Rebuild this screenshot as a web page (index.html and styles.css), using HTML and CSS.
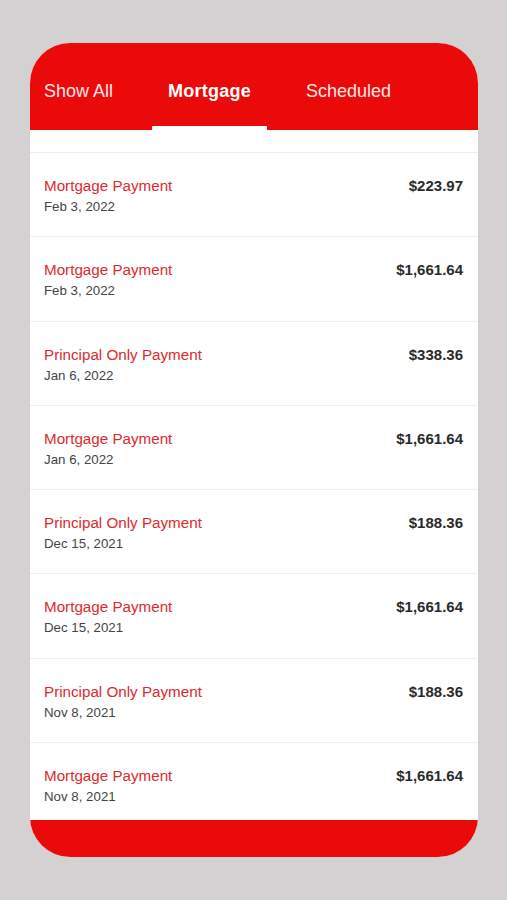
FILE: index.html
```html
<!DOCTYPE html>
<html>
<head>
<meta charset="utf-8">
<link rel="stylesheet" href="styles.css">
</head>
<body>
<div class="phone">
  <div class="tabs">
    <div class="tab">Show All</div>
    <div class="tab active">Mortgage</div>
    <div class="tab">Scheduled</div>
  </div>
  <div class="list">
    <div class="spacer"></div>
    <div class="row"><div class="info"><div class="title">Mortgage Payment</div><div class="date">Feb 3, 2022</div></div><div class="amount">$223.97</div></div>
    <div class="row"><div class="info"><div class="title">Mortgage Payment</div><div class="date">Feb 3, 2022</div></div><div class="amount">$1,661.64</div></div>
    <div class="row"><div class="info"><div class="title">Principal Only Payment</div><div class="date">Jan 6, 2022</div></div><div class="amount">$338.36</div></div>
    <div class="row"><div class="info"><div class="title">Mortgage Payment</div><div class="date">Jan 6, 2022</div></div><div class="amount">$1,661.64</div></div>
    <div class="row"><div class="info"><div class="title">Principal Only Payment</div><div class="date">Dec 15, 2021</div></div><div class="amount">$188.36</div></div>
    <div class="row"><div class="info"><div class="title">Mortgage Payment</div><div class="date">Dec 15, 2021</div></div><div class="amount">$1,661.64</div></div>
    <div class="row"><div class="info"><div class="title">Principal Only Payment</div><div class="date">Nov 8, 2021</div></div><div class="amount">$188.36</div></div>
    <div class="row last"><div class="info"><div class="title">Mortgage Payment</div><div class="date">Nov 8, 2021</div></div><div class="amount">$1,661.64</div></div>
  </div>
  <div class="footer"></div>
</div>
</body>
</html>
```
FILE: styles.css
```css
html, body {
  margin: 0;
  padding: 0;
  background: #d4d1d2;
  font-family: "Liberation Sans", Arial, sans-serif;
}
body {
  padding-top: 43px;
  height: 900px;
  box-sizing: border-box;
}
.phone {
  margin-left: 30px;
  width: 448px;
  height: 814px;
  border-radius: 40px;
  overflow: hidden;
  background: #fff;
  display: flex;
  flex-direction: column;
}
.tabs {
  height: 87px;
  background: #eb0a0a;
  display: flex;
  gap: 23px;
  box-sizing: border-box;
}
.tab {
  position: relative;
  padding: 37px 16px 0;
  font-size: 18px;
  line-height: 22px;
  color: #ffe6e6;
}
.tab:first-child {
  margin-left: -2px;
}
.tab.active {
  font-weight: bold;
  color: #fff;
  letter-spacing: 0.25px;
}
.tab.active::after {
  content: "";
  position: absolute;
  left: 0;
  right: 0;
  bottom: 0;
  height: 4px;
  background: #fff;
  border-radius: 1px 1px 0 0;
}
.list {
  flex: 1;
  display: flex;
  flex-direction: column;
}
.spacer {
  height: 22px;
}
.row {
  height: 84.3px;
  box-sizing: border-box;
  border-top: 1px solid #efefef;
  padding: 24px 15px 0 14px;
  display: flex;
  justify-content: space-between;
  align-items: flex-start;
}
.row.last {
  height: 78px;
}
.title {
  font-size: 15.2px;
  line-height: 18px;
  color: #dc2a2e;
}
.date {
  margin-top: 3px;
  font-size: 13.3px;
  line-height: 17px;
  color: #444;
}
.amount {
  font-size: 15px;
  line-height: 18px;
  font-weight: bold;
  color: #2a2a2a;
}
.footer {
  height: 37px;
  background: #eb0a0a;
  flex-shrink: 0;
}
```
